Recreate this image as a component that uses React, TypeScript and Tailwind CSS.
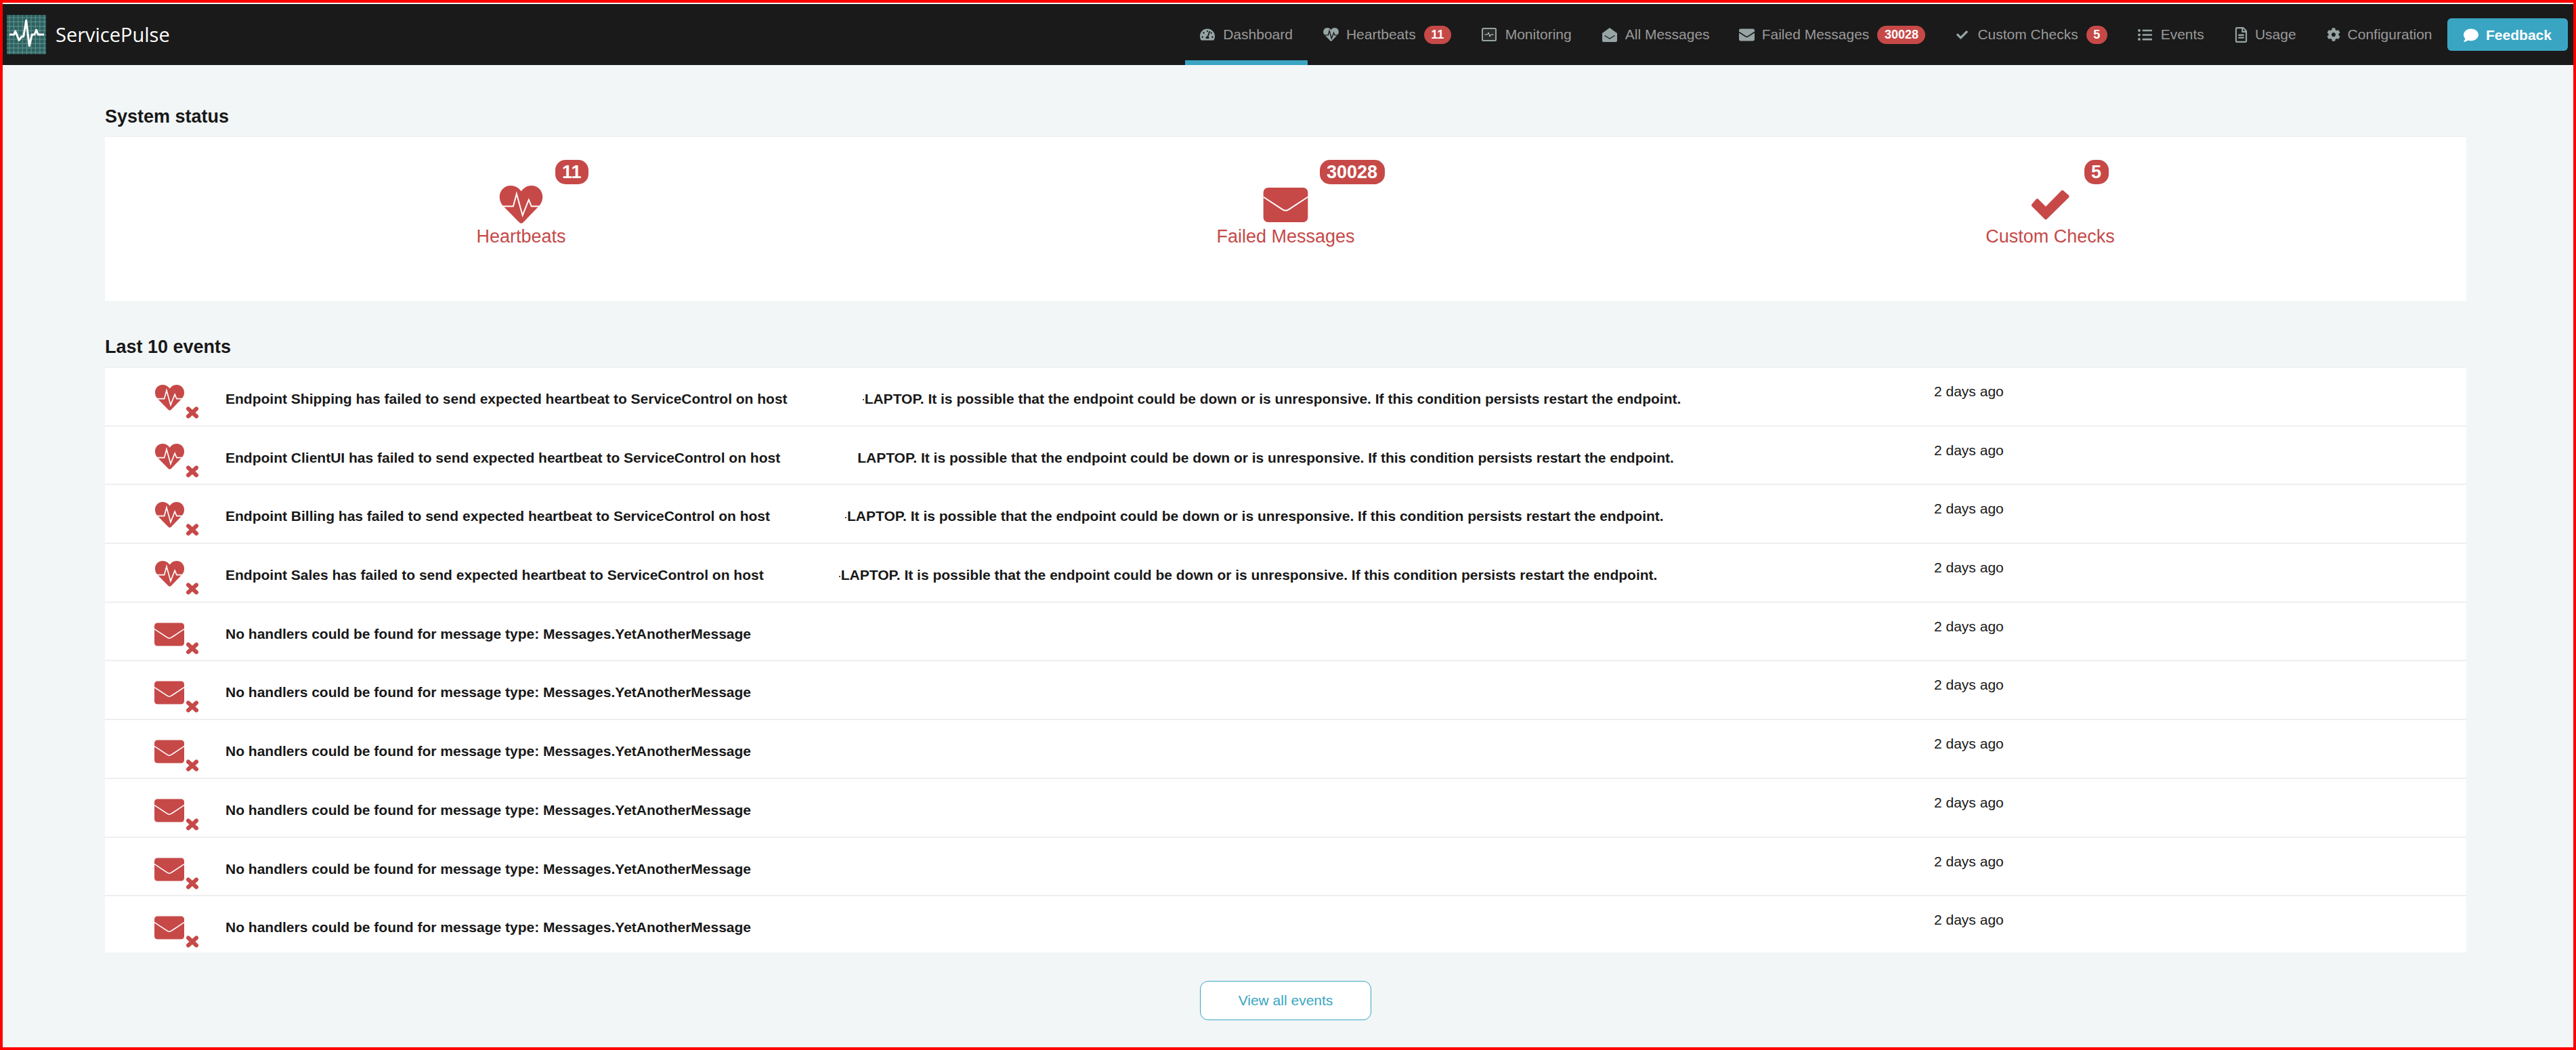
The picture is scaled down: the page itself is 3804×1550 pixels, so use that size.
import { FaCheck, FaCog, FaComment, FaListUl, FaRegFileAlt, FaTachometerAlt } from "react-icons/fa";
import type { ReactNode } from "react";

const RED = "#c64948";

// ─── Icons ────────────────────────────────────────────────────────────────────

function Logo() {
  const ticks = [4, 10.4, 16.8, 23.2, 29.6, 36, 42.4, 48.8, 55.2];
  return (
    <svg width="58" height="58" viewBox="0 0 58 58" className="shrink-0">
      <rect width="58" height="58" fill="#2f5f60" />
      {ticks.map((t) => (
        <g key={t} stroke="#579188" strokeWidth="1.2">
          <line x1={t} y1="0" x2={t} y2="58" />
          <line x1="0" y1={t} x2="58" y2={t} />
        </g>
      ))}
      <path
        d="M4 29H10.7L12.7 24L18 37.3L22 32H24.7L28.7 8.3L33.3 45.7L37.3 29H41L43.7 22.3L46.3 29H55"
        fill="none"
        stroke="#fff"
        strokeWidth="3"
        strokeLinejoin="round"
      />
    </svg>
  );
}

function Heart({ className, fill, line, lineWidth = 2 }: { className: string; fill: string; line: string; lineWidth?: number }) {
  return (
    <svg viewBox="0 0 65 57" className={className}>
      <path
        d="M32.7 56.7C31.5 56.7 30.5 56 29.5 55L4.5 29.5C-5 17 2 0 17 0C24 0 29 3.5 32.7 8.5C36.4 3.5 41.5 0 48 0C63 0 70 17 60.5 29.5L36 55C35 56 34 56.7 32.7 56.7Z"
        fill={fill}
      />
      <path
        d="M0 31H20.7L25.7 12.3L34.7 44.7L44 21.3L48 31H65"
        fill="none"
        stroke={line}
        strokeWidth={lineWidth}
      />
    </svg>
  );
}

function Envelope({ className, fill, line, lineWidth = 2 }: { className: string; fill: string; line: string; lineWidth?: number }) {
  return (
    <svg viewBox="0 0 67 52" className={className}>
      <rect width="67" height="52" rx="7" fill={fill} />
      <path d="M0 14L29 33Q33.5 36 38 33L67 14" fill="none" stroke={line} strokeWidth={lineWidth} />
    </svg>
  );
}

function OpenEnvelope() {
  return (
    <svg viewBox="0 0 22 21" className="h-[21px] w-[22px]">
      <path d="M11 0L22 8V19a2 2 0 0 1-2 2H2a2 2 0 0 1-2-2V8Z" fill="#97a4a4" />
      <path d="M3.5 11.5L11 16L18.5 11.5" fill="none" stroke="#1a1a1a" strokeWidth="1.4" />
    </svg>
  );
}

function MonitorIcon() {
  return (
    <svg viewBox="0 0 22 20" className="h-[20px] w-[22px]">
      <rect x="1" y="1" width="20" height="18" rx="1.5" fill="#2b2d2d" stroke="#97a4a4" strokeWidth="2" />
      <path d="M4.5 10H8.5L10 7L12 13L13.5 10H17.5" fill="none" stroke="#d5dcdc" strokeWidth="1" />
    </svg>
  );
}

function CrossIcon({ className }: { className: string }) {
  return (
    <svg viewBox="0 0 20 18" className={className}>
      <path d="M4 3.5L16 14.5M16 3.5L4 14.5" stroke={RED} strokeWidth="6" strokeLinecap="round" />
    </svg>
  );
}

function BigCheck({ className }: { className: string }) {
  return (
    <svg viewBox="0 0 57 45" className={className}>
      <path
        d="M3.5 23L9.5 16L22 28.5L46.5 3.5L54 10L22 41.5Z"
        fill={RED}
        stroke={RED}
        strokeWidth="5"
        strokeLinejoin="round"
      />
    </svg>
  );
}

// ─── Navbar ───────────────────────────────────────────────────────────────────

interface NavItemProps {
  label: string;
  icon: ReactNode;
  iconBox: string;
  badge?: string;
  active?: boolean;
  className?: string;
}

function NavItem({ label, icon, iconBox, badge, active = false, className = "" }: NavItemProps) {
  return (
    <a
      className={`flex h-full items-center border-b-[7px] px-[22.5px] pt-[7px] text-[21px] text-[#999] ${active ? "border-[#3aa5c3]" : "border-transparent"} ${className}`}
    >
      <span className={`flex shrink-0 items-center ${iconBox}`}>{icon}</span>
      <span>{label}</span>
      {badge && (
        <span className="ml-3 flex h-[27px] items-center rounded-[15px] bg-[#c64948] px-[10.5px] text-[18px] font-bold text-white">
          {badge}
        </span>
      )}
    </a>
  );
}

function Navbar() {
  const gray = "#97a4a4";
  return (
    <header className="mt-[2px] flex h-[90px] shrink-0 items-center bg-[#1a1a1a] pr-2">
      <div className="ml-[6px] flex items-center gap-[14px]">
        <Logo />
        <span className="font-['Open_Sans',sans-serif] text-[29px] text-white">ServicePulse</span>
      </div>
      <nav className="ml-auto flex h-full items-center">
        <NavItem active label="Dashboard" iconBox="w-[34px]" icon={<FaTachometerAlt className="h-[22px] w-[22px] text-[#97a4a4]" />} />
        <NavItem
          label="Heartbeats"
          badge="11"
          iconBox="w-[34px]"
          icon={<Heart className="h-[20px] w-[23px]" fill={gray} line="#1a1a1a" lineWidth={4} />}
        />
        <NavItem label="Monitoring" iconBox="w-[35px]" icon={<MonitorIcon />} />
        <NavItem label="All Messages" className="mr-[-2px]" iconBox="w-[34px]" icon={<OpenEnvelope />} />
        <NavItem
          label="Failed Messages"
          badge="30028"
          iconBox="w-[34px]"
          icon={<Envelope className="h-[19px] w-[23px]" fill={gray} line="#1a1a1a" lineWidth={5} />}
        />
        <NavItem label="Custom Checks" badge="5" iconBox="w-[32px]" icon={<FaCheck className="h-[17px] w-[19px] text-[#97a4a4]" />} />
        <NavItem label="Events" iconBox="w-[34px]" icon={<FaListUl className="h-[21px] w-[21px] text-[#97a4a4]" />} />
        <NavItem label="Usage" iconBox="w-[30px]" icon={<FaRegFileAlt className="h-[23px] w-[19px] text-[#97a4a4]" />} />
        <NavItem label="Configuration" iconBox="w-[31px]" icon={<FaCog className="h-[20px] w-[20px] text-[#97a4a4]" />} />
      </nav>
      <button className="flex h-[48px] w-[178px] items-center justify-center gap-[11px] rounded-[6px] bg-[#3aa5c3] pt-[1px] text-[21px] font-bold text-white">
        <FaComment className="h-[22px] w-[22px]" />
        Feedback
      </button>
    </header>
  );
}

// ─── System status ────────────────────────────────────────────────────────────

interface StatusProps {
  label: string;
  count: string;
  icon: ReactNode;
}

function StatusItem({ label, count, icon }: StatusProps) {
  return (
    <div className="relative flex flex-col items-center">
      <div className="flex h-[56px] items-center">{icon}</div>
      <span className="mt-[4px] text-[27px] leading-[30px] text-[#c64948]">{label}</span>
      <span className="absolute left-1/2 top-[-38px] ml-[50px] flex h-[36px] items-center rounded-[15px] bg-[#c64948] px-[10.5px] text-[27px] font-bold text-white">
        {count}
      </span>
    </div>
  );
}

// ─── Events ───────────────────────────────────────────────────────────────────

function HeartbeatRow({ name, tick = true }: { name: string; tick?: boolean }) {
  return (
    <Row
      kind="heart"
      text={
        <>
          Endpoint {name} has failed to send expected heartbeat to ServiceControl on host
          <span className="inline-block w-[111px]" />
          <span className={`mr-[1px] inline-block h-[2px] w-[2px] align-middle ${tick ? "bg-[#444]" : ""}`} />
          LAPTOP. It is possible that the endpoint could be down or is unresponsive. If this condition persists restart the endpoint.
        </>
      }
    />
  );
}

function Row({ kind, text }: { kind: "heart" | "mail"; text: ReactNode }) {
  return (
    <div className="flex h-[86.7px] items-start border-b-2 border-[#efefef] last:h-[83px] last:border-b-0">
      <div className="relative ml-[73px] w-[105px] shrink-0">
        {kind === "heart" ? (
          <>
            <Heart className="mt-[25px] h-[38px] w-[45px]" fill={RED} line="#fff" lineWidth={2.5} />
            <CrossIcon className="absolute left-[46px] top-[57px] h-[18px] w-[20px]" />
          </>
        ) : (
          <>
            <Envelope className="mt-[29px] h-[35px] w-[44px]" fill={RED} line="#fff" lineWidth={2.5} />
            <CrossIcon className="absolute left-[46px] top-[58px] h-[18px] w-[20px]" />
          </>
        )}
      </div>
      <div className="mt-[31px] w-[2523px] shrink-0 text-[21px] font-bold leading-[30px] text-[#181818]">{text}</div>
      <div className="mt-[20px] text-[21px] leading-[30px] text-[#181818]">2 days ago</div>
    </div>
  );
}

// ─── App ──────────────────────────────────────────────────────────────────────

export default function App() {
  return (
    <div className="flex h-[1550px] w-[3804px] flex-col border-4 border-[#ff0000] bg-[#f2f6f7] font-['Liberation_Sans',sans-serif]">
      <Navbar />
      <main className="pl-[151px] pr-[158px] pt-[61px]">
        <h2 className="mb-[14px] text-[27px] font-bold leading-[30px] text-[#181818]">System status</h2>
        <section className="grid h-[243px] grid-cols-3 border-t border-[#eee] bg-white px-[50px] pt-[72px]">
          <StatusItem label="Heartbeats" count="11" icon={<Heart className="h-[56px] w-[65px]" fill={RED} line="#fff" />} />
          <StatusItem label="Failed Messages" count="30028" icon={<Envelope className="h-[51px] w-[67px]" fill={RED} line="#fff" />} />
          <StatusItem label="Custom Checks" count="5" icon={<BigCheck className="h-[45px] w-[57px]" />} />
        </section>

        <h2 className="mb-[15px] mt-[53px] text-[27px] font-bold leading-[30px] text-[#181818]">Last 10 events</h2>
        <section className="border-t border-[#eee] bg-white">
          <HeartbeatRow name="Shipping" />
          <HeartbeatRow name="ClientUI" tick={false} />
          <HeartbeatRow name="Billing" />
          <HeartbeatRow name="Sales" />
          {[0, 1, 2, 3, 4, 5].map((i) => (
            <Row key={i} kind="mail" text="No handlers could be found for message type: Messages.YetAnotherMessage" />
          ))}
        </section>

        <div className="mt-[42px] flex justify-center">
          <button className="h-[58px] w-[253px] rounded-[12px] border border-[#3aa5c3] bg-white text-[21px] text-[#3aa5c3]">
            View all events
          </button>
        </div>
      </main>
    </div>
  );
}
